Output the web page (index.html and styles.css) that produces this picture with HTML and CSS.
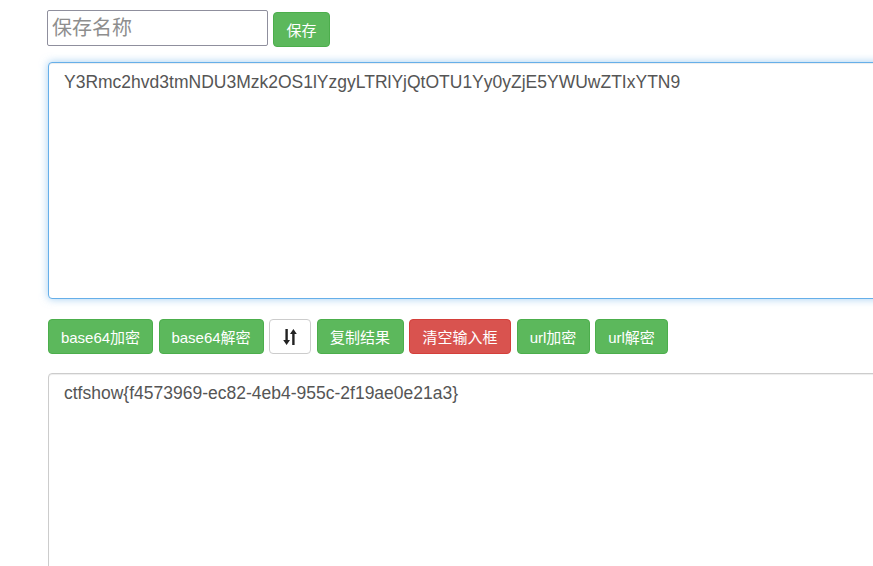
FILE: index.html
```html
<!DOCTYPE html>
<html lang="zh-CN">
<head>
<meta charset="utf-8">
<title>base64</title>
<link rel="stylesheet" href="styles.css">
</head>
<body>
<div class="page">
  <div class="save-row">
    <input class="save-name" type="text" placeholder="保存名称">
    <button class="btn btn-success btn-save">保存</button>
  </div>
  <textarea class="box box-focus">Y3Rmc2hvd3tmNDU3Mzk2OS1lYzgyLTRlYjQtOTU1Yy0yZjE5YWUwZTIxYTN9</textarea>
  <div class="actions">
    <button class="btn btn-success w-b64">base64加密</button>
    <button class="btn btn-success w-b64">base64解密</button>
    <button class="btn btn-default btn-icon" aria-label="swap">
      <svg width="14" height="16" viewBox="0 0 14 16">
        <path d="M2.4 0h2.4v11h2.2L3.6 16 0.2 11h2.2z" fill="#222"/>
        <path d="M9.2 16h2.4V5h2.2L10.4 0 7 5h2.2z" fill="#222"/>
      </svg>
    </button>
    <button class="btn btn-success w-copy">复制结果</button>
    <button class="btn btn-danger w-clear">清空输入框</button>
    <button class="btn btn-success w-url">url加密</button>
    <button class="btn btn-success w-url">url解密</button>
  </div>
  <textarea class="box box-out">ctfshow{f4573969-ec82-4eb4-955c-2f19ae0e21a3}</textarea>
</div>
</body>
</html>
```

FILE: styles.css
```css
html, body {
  margin: 0;
  padding: 0;
  background: #fff;
  overflow: hidden;
}
.page {
  padding: 10px 0 0 47px;
  font-family: "Liberation Sans", Arial, "Noto Sans CJK SC", sans-serif;
  color: #333;
}
.save-row {
  display: flex;
  align-items: flex-start;
  gap: 5px;
}
.save-name {
  box-sizing: border-box;
  width: 221px;
  height: 36px;
  margin: 0;
  padding: 1px 4px;
  border: 1px solid #8f8f9d;
  border-radius: 2px;
  font-family: "Liberation Sans", Arial, "Noto Sans CJK SC", sans-serif;
  font-size: 20px;
  color: #333;
}
.save-name::placeholder {
  color: #8e8e8e;
}
.btn {
  box-sizing: border-box;
  height: 35px;
  margin: 0;
  padding: 0 12px;
  border: 1px solid transparent;
  border-radius: 4px;
  font-family: "Liberation Sans", Arial, "Noto Sans CJK SC", sans-serif;
  font-size: 15px;
  color: #fff;
  display: inline-flex;
  align-items: center;
  justify-content: center;
  white-space: nowrap;
}
.btn-success {
  background: #5cb85c;
  border-color: #4cae4c;
}
.btn-danger {
  background: #d9534f;
  border-color: #d43f3a;
}
.btn-default {
  background: #fff;
  border-color: #ccc;
}
.btn-save {
  margin-top: 2px;
  width: 57px;
  padding: 0;
}
.w-b64 { width: 105px; }
.btn-icon { width: 42px; padding: 0; }
.w-copy { width: 87px; }
.w-clear { width: 102px; }
.w-url { width: 73px; }
.box {
  display: block;
  box-sizing: border-box;
  width: 900px;
  margin: 0 0 0 1px;
  padding: 7px 15px 6px;
  border: 1px solid #ccc;
  border-radius: 4px;
  font-family: "Liberation Sans", Arial, "Noto Sans CJK SC", sans-serif;
  font-size: 17.5px;
  line-height: 1.42857;
  color: #555;
  resize: none;
  background: #fff;
}
.box-focus {
  margin-top: 15px;
  height: 237px;
  border-color: #66afe9;
  box-shadow: inset 0 1px 1px rgba(0,0,0,.075), 0 0 8px rgba(102,175,233,.6);
  outline: none;
}
.box-out {
  height: 240px;
  box-shadow: inset 0 1px 1px rgba(0,0,0,.075);
}
.actions {
  display: flex;
  gap: 5.5px;
  margin: 20px 0 19px 1px;
}
```
